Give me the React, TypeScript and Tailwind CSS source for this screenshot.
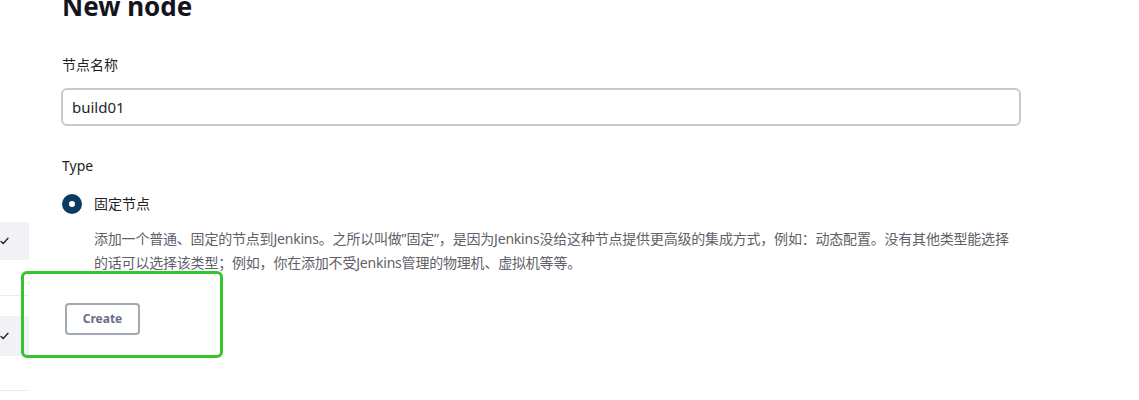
import React from "react";

function Check() {
  return (
    <svg width="9" height="8" viewBox="0 0 9 8" fill="none">
      <path d="M1 4.5 L3.2 6.5 L8 1.2" stroke="#222" strokeWidth="1.3" strokeLinecap="round" strokeLinejoin="round" />
    </svg>
  );
}

export default function App() {
  const font = { fontFamily: '"Noto Sans", "Noto Sans CJK SC", sans-serif' };
  return (
    <div className="relative w-[1139px] h-[400px] bg-white overflow-hidden text-[#1f1f28]" style={font}>
      <div className="flex h-full">
        {/* sidebar remnant */}
        <div className="w-[29px] shrink-0 flex flex-col pt-[222px]">
          <div className="h-[38px] bg-[#f2f2f6] flex items-center"><Check /></div>
          <div className="h-[35px]" />
          <div className="h-px bg-[#ececef]" />
          <div className="h-[20px]" />
          <div className="h-[40px] bg-[#f2f2f6] flex items-center"><Check /></div>
          <div className="h-[34px]" />
          <div className="h-px bg-[#ececef]" />
        </div>
        {/* main */}
        <div className="pl-[33px] flex flex-col w-[992px]">
          <h1 className="text-[26px] font-bold leading-[34px] mt-[-11px] text-[#14141f]">New node</h1>
          <div className="mt-[32px] text-[14px] leading-[20px] text-[#1f1f28]">节点名称</div>
          <input
            readOnly
            value="build01"
            className="mt-[13px] h-[38px] w-[960px] -ml-px border-2 border-[#c4cbcf] rounded-[6px] px-[9px] text-[15px] text-[#1f1f28] outline-none"
            style={font}
          />
          <div className="mt-[30px] text-[14px] leading-[20px]">Type</div>
          <div className="mt-[18px] flex items-center">
            <div className="w-[20px] h-[20px] rounded-full bg-[#0b3b5e] flex items-center justify-center">
              <div className="w-[6px] h-[6px] rounded-full bg-white" />
            </div>
            <span className="ml-[12px] text-[14px] leading-[20px]">固定节点</span>
          </div>
          <div className="mt-[13px] ml-[32px] text-[14px] leading-[24px] tracking-[-0.2px] text-[#5f6068] w-[926px]">
            添加一个普通、固定的节点到Jenkins。之所以叫做”固定”，是因为Jenkins没给这种节点提供更高级的集成方式，例如：动态配置。没有其他类型能选择的话可以选择该类型；例如，你在添加不受Jenkins管理的物理机、虚拟机等等。
          </div>
          <div className="mt-[28px] ml-[3px]">
            <button className="h-[32px] w-[75px] border-2 border-[#a1a9b1] rounded-[4px] text-[12px] font-bold text-[#6a6d85] bg-white" style={font}>
              Create
            </button>
          </div>
        </div>
      </div>
      {/* annotation box */}
      <div className="absolute left-[21px] top-[271px] w-[202px] h-[87px] border-[3px] border-[#35c42b] rounded-[6px]" />
    </div>
  );
}
